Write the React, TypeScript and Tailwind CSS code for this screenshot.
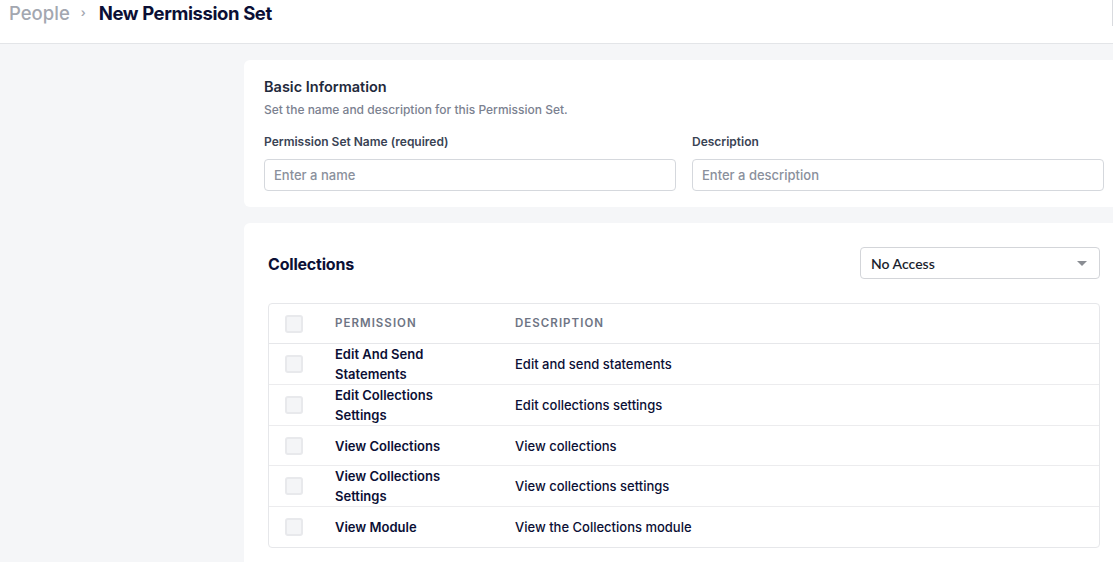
import React from "react";

const rows: [string, string][] = [
  ["Edit And Send Statements", "Edit and send statements"],
  ["Edit Collections Settings", "Edit collections settings"],
  ["View Collections", "View collections"],
  ["View Collections Settings", "View collections settings"],
  ["View Module", "View the Collections module"],
];

function Box() {
  return <div className="w-[18px] h-[18px] rounded-[3px] border-2 border-[#e8e9ec] bg-[#f4f5f7]" />;
}

export default function App() {
  return (
    <div
      className="w-screen h-screen overflow-hidden bg-[#f5f6f8] text-[#0c1033]"
      style={{ fontFamily: "Inter, 'Noto Sans', sans-serif" }}
    >
      <header className="h-[44px] bg-white border-b border-[#e3e5e8] flex items-start px-[9px] pt-px relative">
        <div className="flex items-center h-6 text-[18.5px] leading-6">
          <span className="text-[#a3a7b0] font-medium">People</span>
          <span className="ml-[11px] mr-[13px] text-[#a3a7b0] text-[12px] font-semibold">›</span>
          <span className="font-bold tracking-[-0.4px] text-[#0b0f35]">New Permission Set</span>
        </div>
        <div className="absolute right-0 top-0 w-px h-[26px] bg-[#d9dbdf]" />
      </header>

      <main className="pl-[244px] pt-4 flex flex-col gap-4">
        <section className="w-[880px] shrink-0 bg-white rounded-md px-5 pt-[17px] pb-4">
          <h2 className="text-[14.5px] leading-5 font-semibold text-[#1f2a3c]">Basic Information</h2>
          <p className="mt-[5px] text-[12px] leading-4 font-medium text-[#7b8190]">
            Set the name and description for this Permission Set.
          </p>
          <div className="mt-4 grid grid-cols-2 gap-4">
            <div>
              <label className="block text-[12px] leading-4 font-semibold text-[#3a4354]">
                Permission Set Name (required)
              </label>
              <div className="mt-[9px] h-8 rounded-[4px] border border-[#d5d8dd] px-[9px] pt-px flex items-center text-[13px] font-medium text-[#8a909c]">
                Enter a name
              </div>
            </div>
            <div>
              <label className="block text-[12px] leading-4 font-semibold text-[#3a4354]">Description</label>
              <div className="mt-[9px] h-8 rounded-[4px] border border-[#d5d8dd] px-[9px] pt-px flex items-center text-[13px] font-medium text-[#8a909c]">
                Enter a description
              </div>
            </div>
          </div>
        </section>

        <section className="w-[880px] shrink-0 bg-white rounded-md px-6 pt-6 pb-6">
          <div className="flex items-center justify-between">
            <h2 className="text-[16px] leading-6 font-bold tracking-[-0.2px] text-[#0b0f35] pt-px">Collections</h2>
            <div
              className="w-[240px] h-8 rounded-[4px] border border-[#d3d5d9] flex items-center justify-between pl-[10px] pr-[12px] pt-px text-[14px] text-[#1b1f2e]"
              style={{ fontFamily: "Lato, sans-serif" }}
            >
              <span className="font-semibold">No Access</span>
              <svg width="10" height="5" viewBox="0 0 10 5">
                <path d="M0 0h10L5 5z" fill="#8a8d93" />
              </svg>
            </div>
          </div>

          <div className="mt-6 rounded-[4px] border border-[#e6e7ea]">
            <div className="grid grid-cols-[66px_180px_1fr] h-10 items-center border-b border-[#e6e7ea] pt-px">
              <div className="pl-[16px]">
                <Box />
              </div>
              <div className="text-[11.5px] font-semibold tracking-[0.09em] text-[#6e7484]">PERMISSION</div>
              <div className="text-[11.5px] font-semibold tracking-[0.09em] text-[#6e7484]">DESCRIPTION</div>
            </div>
            {rows.map(([p, d], i) => (
              <div
                key={p}
                className={`grid grid-cols-[66px_180px_1fr] min-h-10 items-center ${
                  i < rows.length - 1 ? "border-b border-[#ececee]" : ""
                }`}
              >
                <div className="pl-[16px]">
                  <Box />
                </div>
                <div className="text-[13px] leading-5 font-semibold text-[#0b0f35] max-w-[140px]">{p}</div>
                <div className="text-[13px] leading-5 font-medium text-[#0b0f35]">{d}</div>
              </div>
            ))}
          </div>
        </section>
      </main>
    </div>
  );
}
